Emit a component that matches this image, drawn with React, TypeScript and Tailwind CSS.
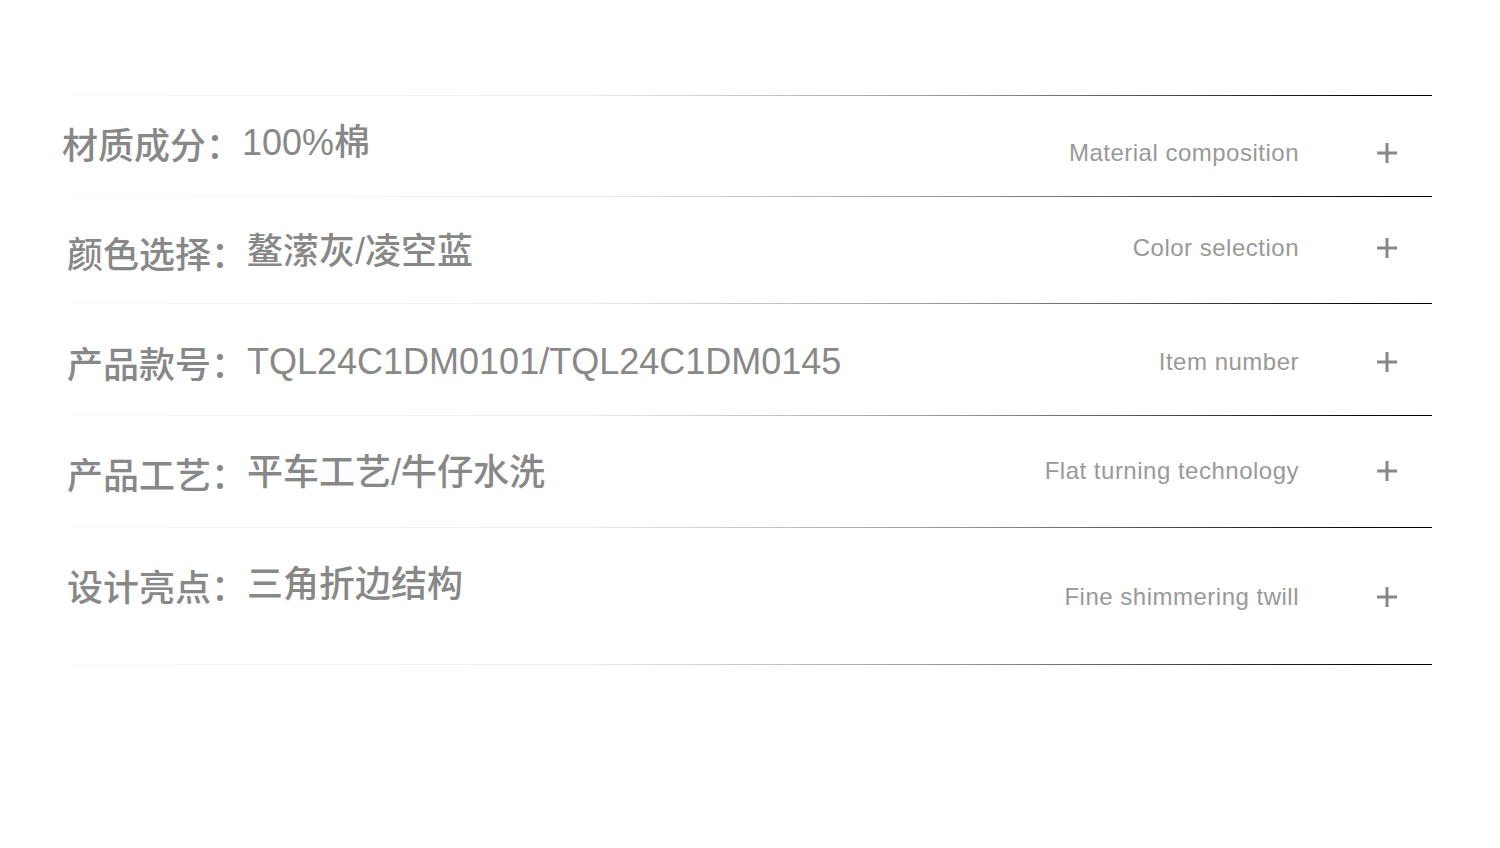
import React from "react";

type Row = {
  label: string;
  value: string;
  en: string;
  rowCls: string;
  zhCls: string;
  enCls: string;
};

const rows: Row[] = [
  { label: "材质成分：", value: "100%棉", en: "Material composition", rowCls: "h-[100px]", zhCls: "pt-[27px] -ml-[8px]", enCls: "pt-[42px]" },
  { label: "颜色选择：", value: "鳌潆灰/凌空蓝", en: "Color selection", rowCls: "h-[106px]", zhCls: "pt-[35px] -ml-[3px]", enCls: "pt-[36px]" },
  { label: "产品款号：", value: "TQL24C1DM0101/TQL24C1DM0145", en: "Item number", rowCls: "h-[111px]", zhCls: "pt-[38px] -ml-[3px]", enCls: "pt-[43px]" },
  { label: "产品工艺：", value: "平车工艺/牛仔水洗", en: "Flat turning technology", rowCls: "h-[111px]", zhCls: "pt-[37px] -ml-[3px]", enCls: "pt-[40px]" },
  { label: "设计亮点：", value: "三角折边结构", en: "Fine shimmering twill", rowCls: "h-[136px]", zhCls: "pt-[37px] -ml-[3px]", enCls: "pt-[54px]" },
];

function Line() {
  return (
    <div className="h-px w-full shrink-0 bg-[linear-gradient(to_right,#fafafa_0%,#ededed_38%,#8c8c8c_68%,#1a1a1a_90%,#000_100%)]" />
  );
}

function Plus() {
  return (
    <svg width="20" height="20" viewBox="0 0 20 20" className="shrink-0">
      <rect x="0" y="8.5" width="20" height="3" fill="#888" />
      <rect x="8.5" y="0" width="3" height="20" fill="#888" />
    </svg>
  );
}

export default function App() {
  return (
    <div className="w-[1500px] h-[848px] bg-white pt-[95px] pl-[70px]">
      <div className="w-[1362px] flex flex-col">
        <Line />
        {rows.map((r, i) => (
          <React.Fragment key={i}>
            <div className={`flex justify-between items-start ${r.rowCls}`}>
              <div
                className={`flex whitespace-nowrap text-[36px] leading-[40px] text-[#888] ${r.zhCls}`}
              >
                <span className="font-medium [font-family:'Noto_Sans_CJK_SC',sans-serif]">{r.label}</span>
                <span className="font-medium [font-family:'Liberation_Sans','Noto_Sans_CJK_SC',sans-serif]">
                  {r.value}
                </span>
              </div>
              <div className={`flex items-center gap-[78px] pr-[35px] ${r.enCls}`}>
                <span className="text-[24px] leading-[30px] text-[#999] tracking-[0.5px] whitespace-nowrap [font-family:'Liberation_Sans',sans-serif]">
                  {r.en}
                </span>
                <Plus />
              </div>
            </div>
            <Line />
          </React.Fragment>
        ))}
      </div>
    </div>
  );
}
